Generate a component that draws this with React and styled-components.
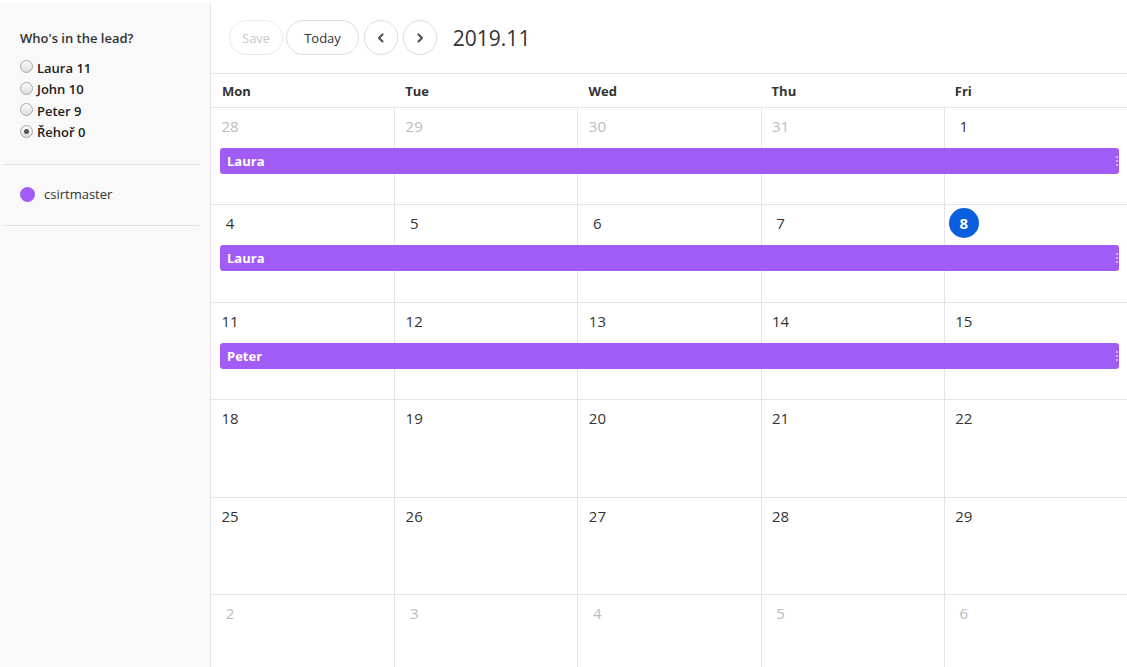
import React from 'react';
import styled, { createGlobalStyle } from 'styled-components';

const GlobalStyle = createGlobalStyle`
  html, body {
    margin: 0;
    padding: 0;
    height: 100%;
    overflow: hidden;
    background: #fff;
  }
  body {
    font-family: 'Open Sans', 'Noto Sans', sans-serif;
    color: #333;
  }
`;

const PURPLE = '#a05cf5';

const LAYOUT = styled.div`
  display: flex;
  height: 100vh;
  overflow: hidden;
`;

const SIDEBAR = styled.aside`
  flex: 0 0 210px;
  margin-top: 3px;
  background: #f9f9f9;
  border-right: 1px solid #e5e5e5;
`;

const LEAD = styled.div`
  padding: 26px 0 21px 20px;

  h3 {
    margin: 0 0 10px;
    font-size: 13px;
    font-weight: 600;
    line-height: 18px;
    color: #333;
  }
`;

const RADIO_ROW = styled.label`
  display: flex;
  align-items: center;
  height: 21.5px;
  font-size: 13px;
  font-weight: 600;
  color: #222;
  gap: 4px;
`;

const RADIO = styled.span`
  width: 11px;
  height: 11px;
  border-radius: 50%;
  border: 1px solid #a8a8a8;
  background: linear-gradient(#fdfdfd, #dcdcdc);
  display: flex;
  align-items: center;
  justify-content: center;
  margin-top: -2px;

  &::after {
    content: '';
    width: 5px;
    height: 5px;
    border-radius: 50%;
    background: ${(p) => (p.checked ? '#555' : 'transparent')};
  }
`;

const SEPARATOR = styled.hr`
  margin: 0 11px 0 2px;
  border: none;
  border-top: 1px solid #e5e5e5;
`;

const CAL_ITEM = styled.div`
  display: flex;
  align-items: center;
  gap: 9px;
  padding: 20px 0 22px 20px;
  line-height: 18px;
  font-size: 13px;
  color: #333;
`;

const DOT = styled.span`
  width: 15px;
  height: 15px;
  border-radius: 50%;
  background: ${PURPLE};
`;

const MAIN = styled.main`
  flex: 1;
  display: flex;
  flex-direction: column;
  min-width: 0;

  & > * {
    flex-shrink: 0;
  }
`;

const TOOLBAR = styled.div`
  height: 74px;
  display: flex;
  align-items: center;
  padding: 2px 0 0 18px;
  border-bottom: 1px solid #e5e5e5;
  box-sizing: border-box;
`;

const BUTTON = styled.button`
  height: 35px;
  width: ${(p) => (p.round ? '34px' : 'auto')};
  padding: ${(p) => (p.round ? '0' : `0 ${p.pad || 17}px`)};
  margin-right: ${(p) => p.gap || 3}px;
  border-radius: 25px;
  border: 1px solid ${(p) => (p.disabled ? '#ebebeb' : '#ddd')};
  background: #fff;
  color: ${(p) => (p.disabled ? '#c8c8c8' : '#333')};
  font-family: 'Open Sans', sans-serif;
  font-size: 13px;
  display: flex;
  align-items: center;
  justify-content: center;
  cursor: pointer;
`;

const TITLE = styled.span`
  margin-left: 13px;
  font-size: 21px;
  color: #333;
`;

const DAYNAMES = styled.div`
  display: grid;
  grid-template-columns: repeat(5, 1fr);
  height: 34px;
  border-bottom: 1px solid #e5e5e5;
  box-sizing: border-box;
`;

const DAYNAME = styled.div`
  padding: 8px 0 0 11px;
  font-size: 13px;
  font-weight: 700;
  color: #333;
`;

const WEEK = styled.div`
  position: relative;
  height: 97.4px;
  display: grid;
  grid-template-columns: repeat(5, 1fr);
  border-bottom: 1px solid #e5e5e5;
  box-sizing: border-box;
`;

const CELL = styled.div`
  border-left: ${(p) => (p.first ? 'none' : '1px solid #e5e5e5')};
  padding: 3px 0 0 4px;
`;

const DATE = styled.span`
  display: inline-flex;
  align-items: center;
  justify-content: center;
  min-width: 30px;
  height: 30px;
  border-radius: 50%;
  font-size: 15px;
  color: ${(p) => (p.today ? '#fff' : p.muted ? '#bbb' : '#333')};
  background: ${(p) => (p.today ? '#0b5fdf' : 'transparent')};
  font-weight: ${(p) => (p.today ? 700 : 400)};
`;

const EVENT = styled.div`
  position: absolute;
  left: 9px;
  right: 8px;
  top: 40px;
  height: 26px;
  border-radius: 3px;
  background: ${PURPLE};
  color: #fff;
  font-size: 13px;
  font-weight: 700;
  line-height: 26px;
  padding-left: 7px;
  box-sizing: border-box;

  &::after {
    content: '';
    position: absolute;
    right: 1px;
    top: 8px;
    height: 10px;
    border-left: 2px dotted rgba(255, 255, 255, 0.55);
  }
`;

const Chevron = ({ dir }) => (
  <svg width="12" height="12" viewBox="0 0 12 12">
    <path
      d={dir === 'left' ? 'M7.5 2.5 L4 6 L7.5 9.5' : 'M4.5 2.5 L8 6 L4.5 9.5'}
      fill="none"
      stroke="#555"
      strokeWidth="2.2"
      strokeLinecap="round"
      strokeLinejoin="round"
    />
  </svg>
);

const weeks = [
  { days: [[28, 1], [29, 1], [30, 1], [31, 1], [1]], event: 'Laura' },
  { days: [[4], [5], [6], [7], [8, 0, 1]], event: 'Laura' },
  { days: [[11], [12], [13], [14], [15]], event: 'Peter' },
  { days: [[18], [19], [20], [21], [22]] },
  { days: [[25], [26], [27], [28], [29]] },
  { days: [[2, 1], [3, 1], [4, 1], [5, 1], [6, 1]] },
];

const leaders = [
  ['Laura 11', false],
  ['John 10', false],
  ['Peter 9', false],
  ['Řehoř 0', true],
];

export default function App() {
  return (
    <>
      <GlobalStyle />
      <LAYOUT>
        <SIDEBAR>
          <LEAD>
            <h3>Who's in the lead?</h3>
            {leaders.map(([name, checked]) => (
              <RADIO_ROW key={name}>
                <RADIO checked={checked} />
                {name}
              </RADIO_ROW>
            ))}
          </LEAD>
          <SEPARATOR />
          <CAL_ITEM>
            <DOT />
            csirtmaster
          </CAL_ITEM>
          <SEPARATOR />
        </SIDEBAR>
        <MAIN>
          <TOOLBAR>
            <BUTTON disabled pad={12}>Save</BUTTON>
            <BUTTON gap={5}>Today</BUTTON>
            <BUTTON round gap={5}>
              <Chevron dir="left" />
            </BUTTON>
            <BUTTON round>
              <Chevron dir="right" />
            </BUTTON>
            <TITLE>2019.11</TITLE>
          </TOOLBAR>
          <DAYNAMES>
            {['Mon', 'Tue', 'Wed', 'Thu', 'Fri'].map((d) => (
              <DAYNAME key={d}>{d}</DAYNAME>
            ))}
          </DAYNAMES>
          {weeks.map((w, i) => (
            <WEEK key={i}>
              {w.days.map(([n, muted, today], j) => (
                <CELL key={j} first={j === 0}>
                  <DATE muted={muted} today={today}>
                    {n}
                  </DATE>
                </CELL>
              ))}
              {w.event && <EVENT>{w.event}</EVENT>}
            </WEEK>
          ))}
        </MAIN>
      </LAYOUT>
    </>
  );
}
